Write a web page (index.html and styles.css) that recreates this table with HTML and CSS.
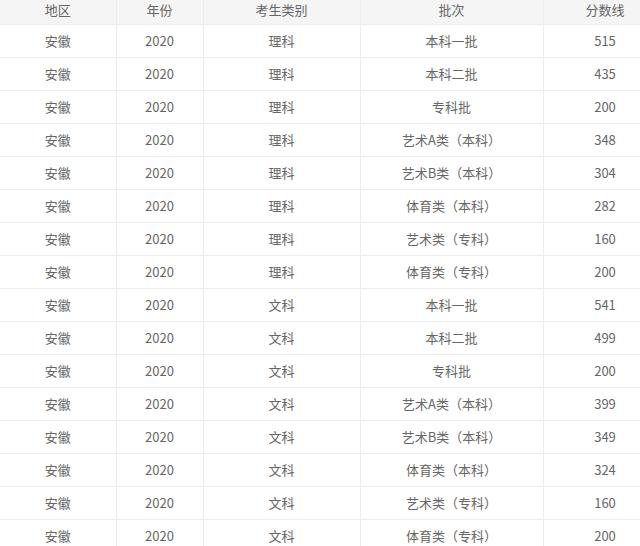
FILE: index.html
```html
<!DOCTYPE html>
<html lang="zh-CN">
<head>
<meta charset="utf-8">
<link rel="stylesheet" href="styles.css">
</head>
<body>
<div class="wrap">
<table class="score">
<colgroup><col class="c1"><col class="c2"><col class="c3"><col class="c4"><col class="c5"></colgroup>
<thead>
<tr><th>地区</th><th>年份</th><th>考生类别</th><th>批次</th><th>分数线</th></tr>
</thead>
<tbody>
<tr><td>安徽</td><td>2020</td><td>理科</td><td>本科一批</td><td>515</td></tr>
<tr><td>安徽</td><td>2020</td><td>理科</td><td>本科二批</td><td>435</td></tr>
<tr><td>安徽</td><td>2020</td><td>理科</td><td>专科批</td><td>200</td></tr>
<tr><td>安徽</td><td>2020</td><td>理科</td><td>艺术A类（本科）</td><td>348</td></tr>
<tr><td>安徽</td><td>2020</td><td>理科</td><td>艺术B类（本科）</td><td>304</td></tr>
<tr><td>安徽</td><td>2020</td><td>理科</td><td>体育类（本科）</td><td>282</td></tr>
<tr><td>安徽</td><td>2020</td><td>理科</td><td>艺术类（专科）</td><td>160</td></tr>
<tr><td>安徽</td><td>2020</td><td>理科</td><td>体育类（专科）</td><td>200</td></tr>
<tr><td>安徽</td><td>2020</td><td>文科</td><td>本科一批</td><td>541</td></tr>
<tr><td>安徽</td><td>2020</td><td>文科</td><td>本科二批</td><td>499</td></tr>
<tr><td>安徽</td><td>2020</td><td>文科</td><td>专科批</td><td>200</td></tr>
<tr><td>安徽</td><td>2020</td><td>文科</td><td>艺术A类（本科）</td><td>399</td></tr>
<tr><td>安徽</td><td>2020</td><td>文科</td><td>艺术B类（本科）</td><td>349</td></tr>
<tr><td>安徽</td><td>2020</td><td>文科</td><td>体育类（本科）</td><td>324</td></tr>
<tr><td>安徽</td><td>2020</td><td>文科</td><td>艺术类（专科）</td><td>160</td></tr>
<tr><td>安徽</td><td>2020</td><td>文科</td><td>体育类（专科）</td><td>200</td></tr>
</tbody>
</table>
</div>
</body>
</html>
```
FILE: styles.css
```css
html, body {
  margin: 0;
  padding: 0;
  background: #fff;
}
body {
  width: 640px;
  height: 546px;
  overflow: hidden;
}
.wrap {
  width: 640px;
  height: 546px;
  overflow: hidden;
}
.score {
  border-collapse: collapse;
  table-layout: fixed;
  width: 667px;
  font-family: "Noto Sans CJK SC", "Liberation Sans", sans-serif;
  font-size: 13px;
  color: #666;
}
.c1 { width: 116px; }
.c2 { width: 87px; }
.c3 { width: 157px; }
.c4 { width: 183px; }
.c5 { width: 124px; }
.score th,
.score td {
  padding: 0;
  text-align: center;
  font-weight: normal;
  border: 1px solid #ececec;
  white-space: nowrap;
}
.score td {
  height: 32px;
  line-height: 32px;
  vertical-align: middle;
}
.score th {
  height: 17px;
  line-height: 17px;
  padding-top: 1px;
  padding-bottom: 6px;
  vertical-align: top;
  background: #f5f5f5;
  color: #666;
  border-top: none;
}
.score tr > :first-child { border-left: none; }
```
